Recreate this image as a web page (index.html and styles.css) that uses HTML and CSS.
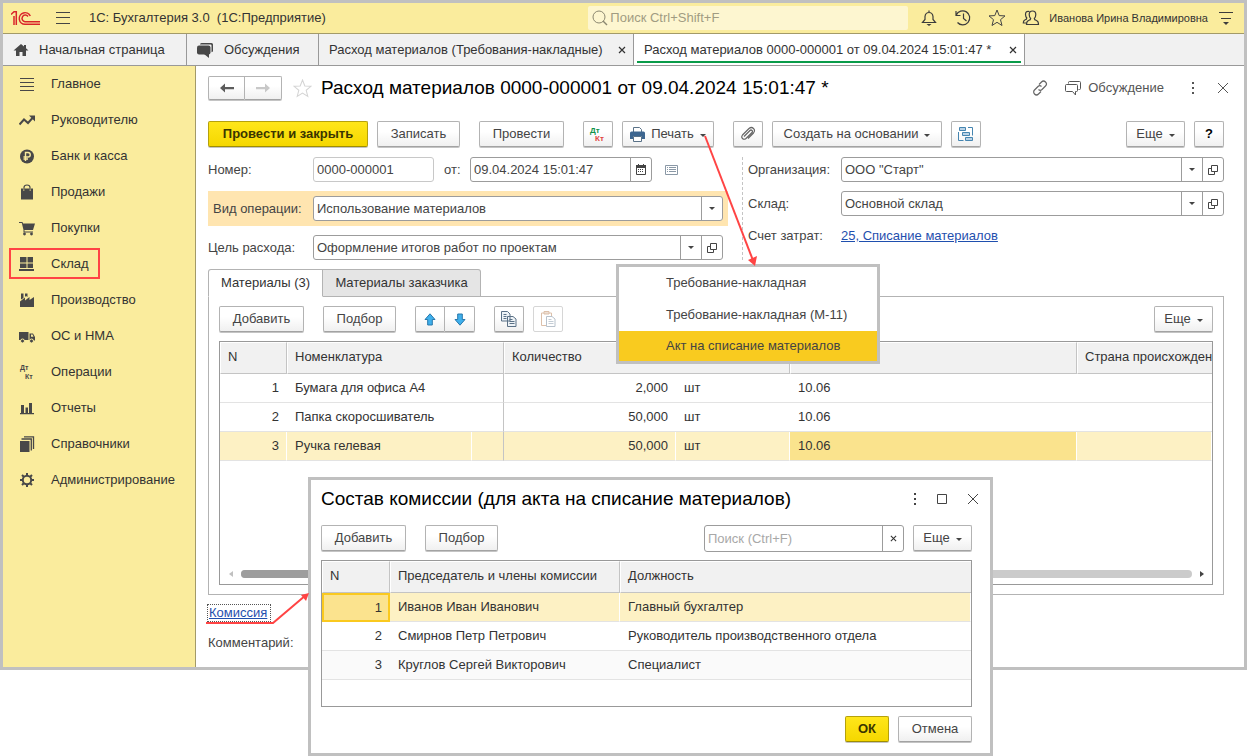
FILE: index.html
```html
<!DOCTYPE html>
<html lang="ru">
<head>
<meta charset="utf-8">
<title>1С: Бухгалтерия 3.0</title>
<link rel="stylesheet" href="styles.css">
</head>
<body>
<svg class="sprite" aria-hidden="true">
  <symbol id="close" viewBox="0 0 12 12"><path d="M1 1l10 10M11 1L1 11" fill="none" stroke="currentColor"/></symbol>
  <symbol id="dots" viewBox="0 0 4 12"><path d="M1 0h2v2H1zM1 5h2v2H1zM1 10h2v2H1z" fill="currentColor"/></symbol>
  <symbol id="caret" viewBox="0 0 6 4"><path d="M0 0h6L3 3z" fill="currentColor"/></symbol>
  <symbol id="open" viewBox="0 0 10 10"><path d="M3.500.5h6v6h-6zM3.500 3.500h-3v6h6v-3" fill="none" stroke="currentColor"/></symbol>
  <symbol id="star" viewBox="0 0 18 18"><path d="M9 1l2.200 5.600 5.800.3-4.500 3.800 1.500 5.800L9 13.300l-5 3.200 1.500-5.800L1 6.900l5.800-.3z" fill="none" stroke="currentColor"/></symbol>
  <symbol id="chat" viewBox="0 0 16 15"><path d="M3.500 2.500V1.500q0-1 1-1h10q1 0 1 1v6q0 1-1 1h-1M1.500 3.500h10q1 0 1 1v5q0 1-1 1H10.500v3.500l-3-3.500h-6q-1 0-1-1v-5q0-1 1-1z" fill="none" stroke="currentColor"/></symbol>
  <symbol id="tabx" viewBox="0 0 8 8"><path d="M1 1l6 6M7 1L1 7" fill="none" stroke="currentColor" stroke-width="1.200"/></symbol>
</svg>

<div class="app">
  <header class="topbar">
    <svg class="logo" viewBox="0 0 29 15"><g fill="none" stroke="#d9242a" stroke-width="1.500"><path d="M0 3.500l3-2.700h2.300V14M3 5v9"/><path d="M19.300 5a5.800 5.800 0 1 0-5.300 8.300h15"/><path d="M17 5.500a3.300 3.300 0 1 0-3 5.200h15"/></g></svg>
    <button class="icon-btn menu-btn" aria-label="Меню"><svg width="14" height="12" viewBox="0 0 14 12"><path d="M0 .5h14M0 5.500h14M0 11.500h14" stroke="#444" fill="none"/></svg></button>
    <span class="app-title">1С: Бухгалтерия 3.0&nbsp; (1С:Предприятие)</span>
    <label class="global-search"><svg width="16" height="16" viewBox="0 0 16 16"><circle cx="7" cy="7" r="6" fill="none" stroke="#8b8770"/><path d="M11 11l4 4" stroke="#8b8770" stroke-width="1.500"/></svg><input type="text" placeholder="Поиск Ctrl+Shift+F" aria-label="Поиск"></label>
    <nav class="top-icons">
      <button class="icon-btn" aria-label="Уведомления"><svg width="18" height="18" viewBox="0 0 18 18"><path d="M2.500 13.500h13l-2.500-3V7.500Q12.500 3.500 9 3.500T5 7.500v3zM9 3.500V1.500" fill="none" stroke="#3c3c3c" stroke-width="1.200"/><path d="M6.500 15h5L9 17z" fill="#3c3c3c"/></svg></button>
      <button class="icon-btn" aria-label="История"><svg width="18" height="18" viewBox="0 0 18 18"><path d="M2.300 6A7 7 0 1 1 3.500 13.500M2 2v4.500h4.500M9.500 4.500V9.500l3 2.500" fill="none" stroke="#3c3c3c" stroke-width="1.200"/></svg></button>
      <button class="icon-btn" aria-label="Избранное"><svg width="18" height="18"><use href="#star"/></svg></button>
      <button class="icon-btn" aria-label="Пользователь"><svg width="18" height="18" viewBox="0 0 18 18"><g fill="none" stroke="#3c3c3c" stroke-width="1.200"><path d="M10.500 2q3.300 0 3.300 3.500 0 2.500-1.500 4 0 1.500 2.200 2 2 .8 2 4h-12q0-3.200 2-4 2.200-.5 2.200-2-1.500-1.500-1.500-4Q7.200 2 10.500 2z"/><path d="M7.500 2.500Q3.500 1.500 3.500 5.500q0 2 1.300 3.500 0 1.500-2 2-1.500.7-1.500 3h3"/></g></svg></button>
      <span class="user">Иванова Ирина Владимировна</span>
      <button class="icon-btn" aria-label="Настройки"><svg width="16" height="16" viewBox="0 0 16 16"><path d="M1 2.500h14M3 8.500h10" stroke="#3c3c3c"/><path d="M5 12h6l-3 3z" fill="#3c3c3c"/></svg></button>
    </nav>
  </header>

  <nav class="tabs">
    <a class="tab tab-home" href="#"><svg width="16" height="14" viewBox="0 0 16 14"><path d="M8 1L.5 7.500H3V13h3.500V9h3v4H13V7.500h2.500L13 5.300V2h-2v1.600z" fill="#484848"/></svg>Начальная страница</a>
    <a class="tab tab-chat" href="#"><svg width="17" height="16" viewBox="0 0 17 16"><path d="M3 2.500Q3 1 4.500 1h10Q16 1 16 2.500V9q0 1-1.500 1.300V3.500q0-1-1-1z" fill="#484848"/><rect x="0" y="3.500" width="13.500" height="9" rx="2" fill="#484848"/><path d="M7 12h5v4z" fill="#484848"/></svg>Обсуждения</a>
    <a class="tab tab-doc" href="#">Расход материалов (Требования-накладные)<svg width="8" height="8"><use href="#tabx"/></svg></a>
    <a class="tab tab-doc active" href="#">Расход материалов 0000-000001 от 09.04.2024 15:01:47 *<svg width="8" height="8"><use href="#tabx"/></svg></a>
  </nav>

  <div class="body">
    <aside class="sidebar">
      <a href="#"><svg viewBox="0 0 16 16"><path d="M1 2.500h14M1 6.500h14M1 10.500h14M1 14.500h14" stroke="#484848"/></svg>Главное</a>
      <a href="#"><svg viewBox="0 0 16 16"><path d="M.5 12.500l4.500-5 4 3.500 4.500-5" fill="none" stroke="#484848" stroke-width="2"/><path d="M10 3.500h6v6z" fill="#484848"/></svg>Руководителю</a>
      <a href="#"><svg viewBox="0 0 16 16"><circle cx="8" cy="8.500" r="7" fill="#484848"/><path d="M6.500 13V4.500h2.500a2.200 2.200 0 0 1 0 4.500H4.500M4.500 11h4.500" fill="none" stroke="#faec9d" stroke-width="1.400"/></svg>Банк и касса</a>
      <a href="#"><svg viewBox="0 0 16 16"><path d="M2 4.500h2v2h1.500v-2h5v2H12v-2h2v11H2z" fill="#484848"/><path d="M5 6V3.500Q5 1 8 1t3 2.500V6" fill="none" stroke="#484848" stroke-width="1.200"/></svg>Продажи</a>
      <a href="#"><svg viewBox="0 0 16 16"><path d="M0 2h3.500l.5 1.500h12L14 10H5.500v1.500H14V12.500H4.500V10L2.800 3H0z" fill="#484848"/><circle cx="5.500" cy="14" r="1.400" fill="#484848"/><circle cx="12.500" cy="14" r="1.400" fill="#484848"/></svg>Покупки</a>
      <a href="#" class="marked"><svg viewBox="0 0 16 16"><path d="M1 1h6.500v5.500H1zM8.500 1H14v5.500H8.500zM1 7.500h6.500V12H1zM8.500 7.500H14V12H8.500zM0 13h15v2H0z" fill="#484848"/></svg>Склад</a>
      <a href="#"><svg viewBox="0 0 16 16"><path d="M1 15V9.500L6 5.500V8.500L10.500 5v3L15 5v10zM2 1.500h2.500V6L2 7.500zM6 1.500h2.500V5L7 4 6 5z" fill="#484848"/></svg>Производство</a>
      <a href="#"><svg viewBox="0 0 16 16"><path d="M0 4h9.500v8H0zM10.500 5.500H14l2 3.500v3.500h-5.500z" fill="#484848"/><path d="M12 6.500h1.500l1 2.200H12z" fill="#faec9d"/><circle cx="3.500" cy="13" r="2" fill="#484848" stroke="#faec9d"/><circle cx="12.500" cy="13" r="2" fill="#484848" stroke="#faec9d"/></svg>ОС и НМА</a>
      <a href="#"><svg viewBox="0 0 16 16" class="dtkt"><text x="1" y="6">Дт</text><text x="6" y="15">Кт</text></svg>Операции</a>
      <a href="#"><svg viewBox="0 0 16 16"><path d="M2 5h3v8.500H2zM6.500 7.500h2.500v6H6.500zM10 3h3v10.500h-3zM1 13h14v1.300H1z" fill="#484848"/></svg>Отчеты</a>
      <a href="#"><svg viewBox="0 0 16 16"><path d="M1 5h9.500v11H1z" fill="#484848"/><path d="M2.500 3h9.800v11.500M5 .800h9.500V13" fill="none" stroke="#484848" stroke-width="1.300"/></svg>Справочники</a>
      <a href="#"><svg viewBox="0 0 16 16"><circle cx="8" cy="8" r="4.200" fill="none" stroke="#484848" stroke-width="2"/><path d="M8 1v2.500M8 12.500V15M1 8h2.500M12.500 8H15M3 3l1.800 1.800M11.200 11.200L13 13M13 3l-1.800 1.800M4.800 11.200L3 13" stroke="#484848" stroke-width="2"/></svg>Администрирование</a>
    </aside>

    <main class="main">
      <div class="title-row">
        <div class="joined nav-btns">
          <button class="btn" aria-label="Назад"><svg width="14" height="10" viewBox="0 0 14 10"><path d="M0 5l5-4.500V4h9v2.200H5V9.500z" fill="#5c5c5c"/></svg></button>
          <button class="btn" aria-label="Вперед"><svg width="14" height="10" viewBox="0 0 14 10"><path d="M14 5L9 .5V4H0v2.200h9v3.300z" fill="#c8c8c8"/></svg></button>
        </div>
        <button class="icon-btn fav" aria-label="В избранное"><svg width="19" height="19" viewBox="0 0 18 18"><use href="#star"/></svg></button>
        <h1>Расход материалов 0000-000001 от 09.04.2024 15:01:47 *</h1>
        <div class="title-tools">
          <button class="icon-btn" aria-label="Ссылка"><svg width="16" height="16" viewBox="0 0 16 16"><path d="M7 4.500l2.500-2.500a2.600 2.600 0 0 1 4 4L10 9.500a2.600 2.600 0 0 1-3.500 0M9 11.500L6.500 14a2.600 2.600 0 0 1-4-4L6 6.500a2.600 2.600 0 0 1 3.500 0" fill="none" stroke="#666" stroke-width="1.200"/></svg></button>
          <button class="icon-btn discuss"><svg width="16" height="15"><use href="#chat"/></svg>Обсуждение</button>
          <button class="icon-btn more" aria-label="Еще"><svg width="4" height="12"><use href="#dots"/></svg></button>
          <button class="icon-btn" aria-label="Закрыть"><svg width="12" height="12"><use href="#close"/></svg></button>
        </div>
      </div>

      <div class="commands">
        <button class="btn primary w-xl">Провести и закрыть</button>
        <button class="btn w-rec">Записать</button>
        <button class="btn w-md gap">Провести</button>
        <button class="btn sq gap" aria-label="Проводки"><svg width="18" height="18" viewBox="0 0 18 18" class="dtkt-color"><text x="1" y="8" fill="#12914a">Дт</text><text x="6" y="16" fill="#e0443e">Кт</text></svg></button>
        <button class="btn w-print"><svg width="15" height="15" viewBox="0 0 15 15"><path d="M3.500 5V.5h6l2 2V5" fill="#fff" stroke="#5a7288"/><path d="M0 6q0-1.500 1.500-1.500h12Q15 4.500 15 6v6h-3V9.500H3V12H0z" fill="#3d6690"/><path d="M3.500 9.500h8v5h-8z" fill="#fff" stroke="#5a7288"/></svg>Печать<svg class="caret" width="6" height="4"><use href="#caret"/></svg></button>
        <button class="btn sq gap" aria-label="Вложения"><svg width="16" height="16" viewBox="0 0 16 16"><path d="M4 10.500l6-6q1-1 2 0t0 2L6 12.500q-2 1.500-3.500 0t0-3.500L9 2.500q2.500-2 4.500 0t0 4.500L8 12.500" fill="none" stroke="#666" stroke-width="1.200"/></svg></button>
        <button class="btn w-xl">Создать на основании<svg class="caret" width="6" height="4"><use href="#caret"/></svg></button>
        <button class="btn sq" aria-label="Структура"><svg width="16" height="16" viewBox="0 0 16 16"><path d="M1.500 1.500h6v3h-6zM4.500 6.500h7v3h-7zM7.500 11.500h7v3h-7z" fill="#b9d2e6" stroke="#4585b0"/><path d="M10 1.500h4.500v8M.5 6v8.500h5" fill="none" stroke="#4585b0"/></svg></button>
        <span class="spacer"></span>
        <button class="btn w-more">Еще<svg class="caret" width="6" height="4"><use href="#caret"/></svg></button>
        <button class="btn sq help">?</button>
      </div>

      <div class="form">
        <div class="col-left">
          <div class="row">
            <label for="num">Номер:</label>
            <div class="field number"><input id="num" type="text" value="0000-000001"></div>
            <label for="date" class="from">от:</label>
            <div class="field date"><input id="date" type="text" value="09.04.2024 15:01:47"><button aria-label="Календарь"><svg width="10" height="11" viewBox="0 0 10 11"><path d="M.5 1.500h9v9h-9z" fill="none" stroke="#444"/><path d="M0 1h10v3H0zM2 0h1v1H2zM7 0h1v1H7z" fill="#444"/><path d="M2 5.500h6M2 7.500h6" stroke="#444" stroke-dasharray="1 1"/></svg></button></div>
            <svg class="list-ic" width="13" height="10" viewBox="0 0 13 10"><path d="M.5.5h12v9H.5z" fill="#fff" stroke="#8a98a6"/><path d="M2 2.500h1M4 2.500h7M2 4.500h1M4 4.500h7M2 6.500h1M4 6.500h7" stroke="#8a98a6"/></svg>
          </div>
          <div class="row hot">
            <label for="kind">Вид операции:</label>
            <div class="field"><input id="kind" type="text" value="Использование материалов"><button aria-label="Выбрать"><svg width="6" height="4"><use href="#caret"/></svg></button></div>
          </div>
          <div class="row">
            <label for="aim">Цель расхода:</label>
            <div class="field"><input id="aim" type="text" value="Оформление итогов работ по проектам"><button aria-label="Выбрать"><svg width="6" height="4"><use href="#caret"/></svg></button><button aria-label="Открыть"><svg width="10" height="10"><use href="#open"/></svg></button></div>
          </div>
        </div>
        <div class="col-right">
          <div class="row">
            <label for="org">Организация:</label>
            <div class="field"><input id="org" type="text" value='ООО "Старт"'><button aria-label="Выбрать"><svg width="6" height="4"><use href="#caret"/></svg></button><button aria-label="Открыть"><svg width="10" height="10"><use href="#open"/></svg></button></div>
          </div>
          <div class="row">
            <label for="store">Склад:</label>
            <div class="field"><input id="store" type="text" value="Основной склад"><button aria-label="Выбрать"><svg width="6" height="4"><use href="#caret"/></svg></button><button aria-label="Открыть"><svg width="10" height="10"><use href="#open"/></svg></button></div>
          </div>
          <div class="row cost"><span class="lbl">Счет затрат:</span><a class="link" href="#">25, Списание материалов</a></div>
        </div>
      </div>

      <div class="page-tabs">
        <button class="ptab on">Материалы (3)</button><button class="ptab">Материалы заказчика</button><span class="ptab-line"></span>
      </div>
      <section class="panel">
        <div class="commands inner">
          <button class="btn w-md">Добавить</button>
          <button class="btn w-sm gap">Подбор</button>
          <div class="joined gap">
            <button class="btn sq" aria-label="Вверх"><svg width="12" height="13" viewBox="0 0 12 13"><path d="M6 .8l5 5.700H8.300V12H3.700V6.500H1z" fill="#3fb0ec" stroke="#2878ac"/></svg></button>
            <button class="btn sq" aria-label="Вниз"><svg width="12" height="13" viewBox="0 0 12 13"><path d="M6 12.200L1 6.500h2.700V1h4.600v5.500H11z" fill="#3fb0ec" stroke="#2878ac"/></svg></button>
          </div>
          <button class="btn sq gap" aria-label="Копировать"><svg width="16" height="16" viewBox="0 0 16 16"><path d="M.5.500h6l2.500 2.500v7H.5zM6.500 5.500h5.500l3 2.500v7.500H6.500z" fill="#eef3f7" stroke="#5b7186"/><path d="M2.500 3.500h3M2.500 5.500h3M2.500 7.500h3M8.500 8.500h3M8.500 10.500h5M8.500 12.500h5" stroke="#5b7186"/></svg></button>
          <button class="btn sq" disabled aria-label="Вставить"><svg width="16" height="16" viewBox="0 0 16 16"><path d="M1.500 2v12.500h10V2zM4 .5h5v2.500H4z" fill="#fff" stroke="#dcc0aa"/><path d="M6.500 5.500h5.500l3 2.500v7.500H6.500z" fill="#fff" stroke="#b8c2cc"/><path d="M8.500 8.500h3M8.500 10.500h5M8.500 12.500h5" stroke="#c3ccd5"/></svg></button>
          <span class="spacer"></span>
          <button class="btn w-more">Еще<svg class="caret" width="6" height="4"><use href="#caret"/></svg></button>
        </div>
        <div class="grid-box">
          <table class="grid materials">
            <colgroup><col class="c-n"><col class="c-name"><col class="c-char"><col class="c-qty"><col class="c-unit"><col class="c-acc"><col></colgroup>
            <thead><tr><th>N</th><th colspan="2">Номенклатура</th><th colspan="2">Количество</th><th>Счет учета</th><th>Страна происхождения</th></tr></thead>
            <tbody>
              <tr><td class="r">1</td><td>Бумага для офиса А4</td><td class="edge"></td><td class="r">2,000</td><td>шт</td><td>10.06</td><td></td></tr>
              <tr><td class="r">2</td><td>Папка скоросшиватель</td><td class="edge"></td><td class="r">50,000</td><td>шт</td><td>10.06</td><td></td></tr>
              <tr class="sel"><td class="r">3</td><td>Ручка гелевая</td><td class="edge"></td><td class="r">50,000</td><td>шт</td><td class="cur">10.06</td><td></td></tr>
            </tbody>
          </table>
          <div class="hscroll"><svg width="4" height="6" viewBox="0 0 4 6"><path d="M4 0v6L0 3z" fill="#c0c0c0"/></svg><span class="track"><span class="thumb"></span></span><svg width="4" height="6" viewBox="0 0 4 6"><path d="M0 0v6l4-3z" fill="#444"/></svg></div>
        </div>
      </section>
      <div class="footer">
        <a class="link focus" href="#">Комиссия</a>
        <span class="lbl">Комментарий:</span>
      </div>
    </main>
  </div>
</div>

<div class="popup" role="menu">
  <button role="menuitem">Требование-накладная</button>
  <button role="menuitem">Требование-накладная (М-11)</button>
  <button role="menuitem" class="on">Акт на списание материалов</button>
</div>

<div class="dialog" role="dialog" aria-labelledby="dlg-title">
  <div class="dlg-head">
    <h2 id="dlg-title">Состав комиссии (для акта на списание материалов)</h2>
    <div class="dlg-tools">
      <button class="icon-btn" aria-label="Еще"><svg width="4" height="12"><use href="#dots"/></svg></button>
      <button class="icon-btn" aria-label="Развернуть"><svg width="10" height="10" viewBox="0 0 10 10"><path d="M.5.5h9v9h-9z" fill="none" stroke="#444"/></svg></button>
      <button class="icon-btn" aria-label="Закрыть"><svg width="12" height="12"><use href="#close"/></svg></button>
    </div>
  </div>
  <div class="commands dlg-commands">
    <button class="btn w-md">Добавить</button>
    <button class="btn w-sm gap">Подбор</button>
    <span class="spacer"></span>
    <div class="field find"><input type="text" placeholder="Поиск (Ctrl+F)" aria-label="Поиск"><button aria-label="Очистить"><svg width="7" height="7" viewBox="0 0 8 8"><use href="#tabx"/></svg></button></div>
    <button class="btn w-more">Еще<svg class="caret" width="6" height="4"><use href="#caret"/></svg></button>
  </div>
  <div class="grid-box dlg-grid">
    <table class="grid">
      <colgroup><col class="d-n"><col class="d-name"><col></colgroup>
      <thead><tr><th>N</th><th>Председатель и члены комиссии</th><th>Должность</th></tr></thead>
      <tbody>
        <tr class="sel"><td class="r framed">1</td><td>Иванов Иван Иванович</td><td>Главный бухгалтер</td></tr>
        <tr><td class="r">2</td><td>Смирнов Петр Петрович</td><td>Руководитель производственного отдела</td></tr>
        <tr class="alt"><td class="r">3</td><td>Круглов Сергей Викторович</td><td>Специалист</td></tr>
      </tbody>
    </table>
  </div>
  <div class="dlg-foot">
    <button class="btn primary w-ok">ОК</button>
    <button class="btn w-cancel">Отмена</button>
  </div>
</div>

<svg class="arrow arrow-print" width="60" height="136" viewBox="0 0 60 136" aria-hidden="true"><path d="M5 4l49 127" stroke="#f44" stroke-width="2"/><path d="M55 134l-7-6 9-4z" fill="#f44"/></svg>
<svg class="arrow arrow-staff" width="106" height="36" viewBox="0 0 106 36" aria-hidden="true"><path d="M0 32h67l33-28" fill="none" stroke="#f44" stroke-width="2"/><path d="M103 2l-8 2 5 6z" fill="#f44"/></svg>
</body>
</html>
```
FILE: styles.css
```css
*, *::after { box-sizing: border-box; }
body {
  margin: 0;
  background: #fff;
  color: #333;
  font: 13px/16px "Liberation Sans", Arial, sans-serif;
}
button, input { font: inherit; color: inherit; margin: 0; padding: 0; }
button { border: 0; background: none; white-space: nowrap; }
a { color: inherit; text-decoration: none; }
svg { flex: none; display: block; }
h1, h2 { margin: 0; font-weight: 400; color: #000; white-space: nowrap; }
.sprite { position: absolute; width: 0; height: 0; }
.spacer { flex: 1; }
.icon-btn { display: flex; align-items: center; color: #444; }

.app { border: 3px solid #c0c0c0; }

/* top bar */
.topbar {
  display: flex;
  align-items: center;
  height: 31px;
  padding: 0 10px 0 8px;
  background: #faec9d;
  border-bottom: 1px solid #a39a68;
}
.logo { width: 29px; height: 15px; }
.menu-btn { margin-left: 16px; }
.app-title { margin-left: 19px; white-space: nowrap; flex: 1; }
.global-search {
  display: flex;
  align-items: center;
  gap: 2px;
  width: 320px;
  height: 24px;
  padding: 0 4px;
  background: #fdf6d0;
  border-radius: 2px;
}
.global-search input { flex: 1; min-width: 0; border: 0; background: none; outline: 0; }
.global-search input::placeholder { color: #a19c82; opacity: 1; }
.top-icons { display: flex; align-items: center; gap: 16px; margin-left: 12px; }
.user { font-size: 11px; margin-left: -7px; margin-right: -6px; white-space: nowrap; }

/* window tabs */
.tabs { display: flex; height: 32px; background: #f1f1f1; border-bottom: 1px solid #999; }
.tab {
  display: flex;
  align-items: center;
  justify-content: space-between;
  padding: 0 7px 0 10px;
  border-right: 1px solid #999;
  white-space: nowrap;
}
.tab-home, .tab-chat { justify-content: flex-start; gap: 10px; }
.tab-home { width: 184px; }
.tab-chat { width: 132px; }
.tab-doc { width: 315px; }
.tab-doc.active { position: relative; width: 391px; background: #fff; }
.active::after {
  content: "";
  position: absolute;
  left: 3px; right: 3px; bottom: 2px;
  height: 2px;
  background: #0a9b49;
}

/* sections */
.body { display: flex; }
.sidebar { width: 193px; background: #faec9d; border-right: 1px solid #a39a68; }
.sidebar a {
  display: flex;
  align-items: center;
  gap: 16px;
  height: 36px;
  padding-left: 16px;
  position: relative;
}
.sidebar svg { width: 16px; height: 16px; }
.dtkt { font-size: 7px; font-weight: 700; fill: #484848; }
.marked::after {
  content: "";
  position: absolute;
  left: 6px; top: 2px;
  width: 91px; height: 31px;
  border: 2px solid #f44;
}

/* form */
.main { flex: 1; min-width: 0; padding: 9px 20px 16px 12px; color: #444; }
.title-row { display: flex; align-items: center; height: 26px; }
.joined { display: flex; }
.joined .btn + .btn { border-left-width: 0; border-radius: 0 2px 2px 0; }
.joined .btn:first-child { border-radius: 2px 0 0 2px; }
.nav-btns .btn { width: 37px; height: 24px; }
.fav { margin: 0 9px 0 11px; color: #d4d4d4; }
h1, h2 { font-size: 19px; line-height: 24px; }
.title-tools { display: flex; align-items: center; margin-left: auto; gap: 17px; margin-right: -5px; }
.title-tools .icon-btn { color: #555; }
.discuss { gap: 7px; }
.more { margin: 0 5px 0 10px; }

.commands { display: flex; align-items: flex-start; gap: 9px; margin-top: 20px; height: 27px; }
.commands .gap { margin-left: 10px; }
.btn {
  display: flex;
  align-items: center;
  justify-content: center;
  height: 26px;
  border: 1px solid #b3b3b3;
  border-bottom-color: #a3a3a3;
  border-radius: 2px;
  background: linear-gradient(#fff 40%, #f0f0f0);
  box-shadow: 0 1px 0 #c4c4c4;
  color: #444;
  gap: 6px;
}
.btn:disabled { border-color: #d6d6d6; background: #fff; box-shadow: none; }
.btn .caret { margin-top: 4px; }
.primary {
  border-color: #b5a10c;
  border-bottom-color: #a08e00;
  background: linear-gradient(#ffe61a, #f5d700);
  color: #3a3500;
  font-weight: 700;
}
.w-xl { min-width: 160px; padding: 0 8px; }
.commands > .w-xl:not(.primary) { min-width: 170px; }
.w-md { min-width: 85px; }
.w-rec { min-width: 83px; }
.w-sm { min-width: 73px; }
.w-more { min-width: 59px; }
.w-print { min-width: 92px; }
.w-ok { min-width: 44px; }
.w-cancel { min-width: 74px; }
.sq { width: 30px; }
.help { color: #000; font-weight: 700; }
.dtkt-color { font-size: 8px; font-weight: 700; }

.form { display: flex; margin-top: 9px; }
.col-left { width: 535px; padding-right: 14px; border-right: 1px dashed #c4c4c4; display: flex; flex-direction: column; }
.col-right { flex: 1; padding-left: 5px; }
.row { display: flex; align-items: center; height: 25px; }
.col-left .row { padding-right: 5px; }
.col-left .row > label:first-child { width: 105px; }
.row.hot { height: 35px; margin: 9px 0; background: #ffe5b0; }
.col-left .row.hot > label { padding-left: 5px; }
.col-right .row { margin-bottom: 9px; }
.col-right .row > :first-child { width: 93px; flex: none; }
.col-right .cost { height: 22px; margin: 0; }
.field {
  display: flex;
  flex: 1;
  min-width: 0;
  height: 25px;
  border: 1px solid #9c9c9c;
  border-radius: 3px;
  background: #fff;
  overflow: hidden;
}
.field input { flex: 1; min-width: 0; border: 0; outline: 0; padding: 0 3px; background: none; }
.field button {
  display: flex;
  align-items: center;
  justify-content: center;
  width: 21px;
  border-left: 1px solid #9c9c9c;
}
.field.number { flex: 0 0 121px; border-color: #c8c8c8; }
.field.date { flex: 0 0 182px; }
.from { width: 36px; padding-left: 10px; }
.list-ic { margin-left: 13px; }
.link { color: #1f4fae; text-decoration: underline; }

/* pages */
.page-tabs { display: flex; margin-top: 9px; height: 28px; }
.ptab { border: 1px solid #b3b3b3; background: #e5e5e5; min-width: 158px; border-left-width: 0; border-radius: 0 3px 0 0; color: #333; }
.ptab.on { background: #fff; border-left-width: 1px; border-bottom-color: #fff; min-width: 115px; border-radius: 3px 0 0 0; }
.ptab-line { flex: 1; border-bottom: 1px solid #b3b3b3; }
.panel { border: 1px solid #b3b3b3; border-top: 0; padding: 9px 10px 9px; }
.commands.inner { margin-top: 0; }
.grid-box { border: 1px solid #999; overflow: hidden; color: #333; }
.panel .grid-box { margin-top: 8px; }
.grid { width: 100%; table-layout: fixed; border-collapse: separate; border-spacing: 0; }
.c-n { width: 67px; } .c-name { width: 185px; } .c-char { width: 32px; }
.c-qty { width: 172px; } .c-unit { width: 114px; } .c-acc { width: 287px; }
.d-n { width: 68px; } .d-name { width: 230px; }
.grid th {
  height: 32px;
  padding: 0 7px 2px;
  text-align: left;
  font-weight: 400;
  background: #f1f1f1;
  border: 1px solid #fff;
  border-bottom: 1px solid #c4c4c4;
  border-right: 1px solid #c4c4c4;
  white-space: nowrap;
  overflow: hidden;
}
.grid th:last-child { border-right: 0; padding-right: 0; }
.grid td { height: 29px; padding: 0 8px; border-bottom: 1px solid #e3e3e3; white-space: nowrap; }
.grid .r { text-align: right; }
.grid .edge { border-right: 1px solid #c4c4c4; }
.sel td:not(.edge) { border-right: 1px solid #fff; }
.sel td { background: #fdf1c4; }
.grid .sel .r { padding-right: 7px; }
.sel .cur { background: #fae38d; }
.grid .sel .framed { background: #fbe38e; border: 2px solid #fac91f; padding-right: 6px; }
.alt td { background: #fafafa; }
.hscroll { display: flex; align-items: center; gap: 8px; padding: 0 8px 0 9px; height: 20px; margin-top: 103px; }
.track { flex: 1; height: 8px; border-radius: 4px; background: #cbcbcb; }
.thumb { display: block; width: 60%; height: 8px; border-radius: 4px; background: #9d9d9d; }
.footer { display: flex; flex-direction: column; align-items: flex-start; gap: 14px; margin-top: 10px; }
.focus { outline: 1px dotted #555; padding: 0 3px 0 1px; }

/* print menu */
.popup {
  position: absolute;
  left: 616px; top: 264px;
  display: flex;
  flex-direction: column;
  width: 264px;
  border: 3px solid #c0c0c0;
  background: #fff;
  color: #444;
}
.popup button { height: 32px; padding-left: 47px; text-align: left; }
.popup .on { height: 30px; background: #f9cb1f; }

/* commission window */
.dialog {
  position: absolute;
  left: 308px; top: 477px;
  width: 685px;
  padding: 7px 18px 10px 10px;
  border: 3px solid #c0c0c0;
  background: #fff;
}
.dlg-head { display: flex; align-items: center; justify-content: space-between; height: 24px; }
.dlg-tools { display: flex; align-items: center; gap: 20px; margin-right: -7px; }
.dlg-commands { margin-top: 14px; }
.find { flex: 0 0 200px; height: 27px; }
.find input::placeholder { color: #a8a8a8; opacity: 1; }
.dlg-grid { margin-top: 8px; height: 147px; }
.dlg-foot { display: flex; justify-content: flex-end; gap: 9px; margin: 9px 0 1px; }

.arrow { position: absolute; fill: none; }
.arrow-print { left: 700px; top: 132px; }
.arrow-staff { left: 206px; top: 591px; }
```
